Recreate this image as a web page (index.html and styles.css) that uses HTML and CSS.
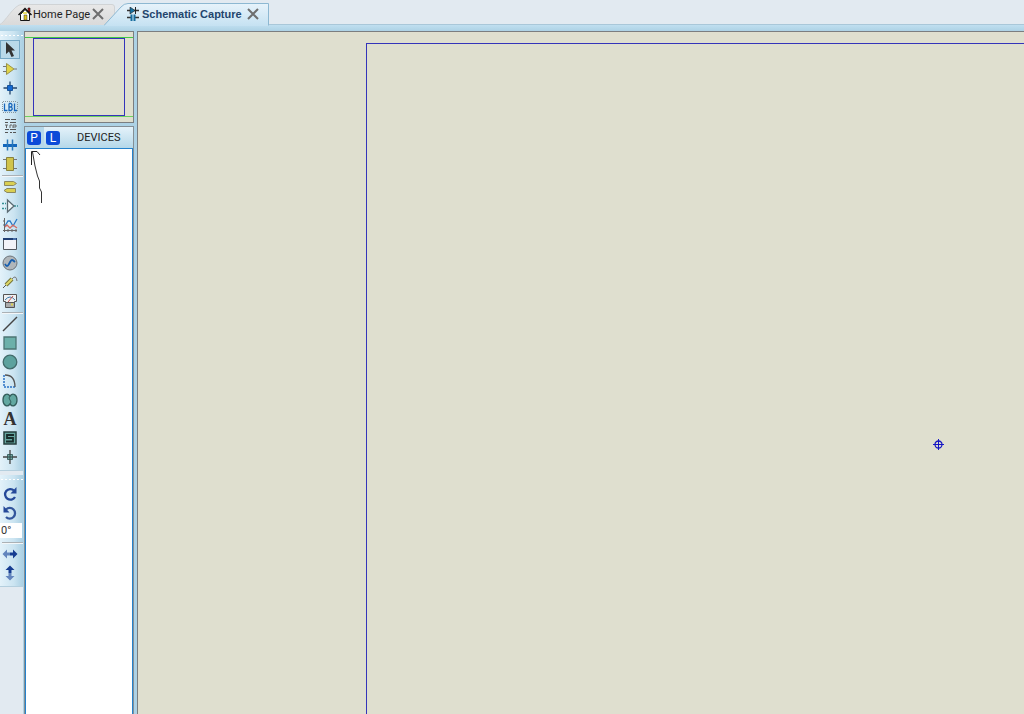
FILE: index.html
```html
<!DOCTYPE html>
<html lang="en">
<head>
    <meta charset="UTF-8">
    <meta name="viewport" content="width=device-width, initial-scale=1.0">
    <title>Schematic Capture</title>
    <link rel="stylesheet" href="styles.css">
</head>
<body>
    <header class="tabs">
        <div class="tab home">
            <svg class="tab-shape" width="116" height="22"><defs><linearGradient id="g1" x2="0" y2="1"><stop stop-color="#e8e8e8"/><stop offset="1" stop-color="#dadada"/></linearGradient></defs><path d="M-1 22C5 20 14 1 22 1.500H112Q114.500 1.500 114.500 4V22" fill="url(#g1)" stroke="#d0d3d5"/></svg>
            <svg class="tab-icon" width="14" height="14" viewBox="0 0 14 14"><path d="M2.500 7.500V13.500H11.500V7L7 2.500Z" fill="#fff" stroke="#111"/><path d="M10 1h2v4h-2z" fill="#b22" stroke="#111" stroke-width=".6"/><path d="M.5 8L7 1.500L13.500 8" fill="none" stroke="#111" stroke-width="1.500"/><path d="M6 8h3v5H6z" fill="#dfc520" stroke="#333" stroke-width=".5"/><path d="M5 5h4v2H5z" fill="#eee36a"/></svg>
            <button class="tab-name">Home Page</button>
            <button class="close" aria-label="Close Home Page"><svg width="12" height="12"><path d="M1 1L11 11M11 1L1 11" stroke="#6e6e6e" stroke-width="2"/></svg></button>
        </div>
        <div class="tab active">
            <svg class="tab-shape" width="166" height="23"><defs><linearGradient id="g2" x2="0" y2="1"><stop stop-color="#e7f3fb"/><stop offset="1" stop-color="#c6e2f2"/></linearGradient></defs><path d="M0 22.500L17 4Q20 .5 24 .5H164.500V22.500" fill="url(#g2)" stroke="#8db8d2"/><path d="M1 22.500H164" stroke="#c6e2f2"/></svg>
            <svg class="tab-icon" width="12" height="15" viewBox="0 0 12 15"><path d="M0 3.500H12M0 10.500H4M8 10.500H12" stroke="#333" stroke-width="1.300"/><path d="M3 0L8 3.500L3 7Z" fill="#1673a5" stroke="#222" stroke-width=".6"/><path d="M8.500 0V7" stroke="#222"/><path d="M4.500 7.500V14M7.500 7.500V14" stroke="#156c9e" stroke-width="2"/></svg>
            <button class="tab-name">Schematic Capture</button>
            <button class="close" aria-label="Close Schematic Capture"><svg width="12" height="12"><path d="M1 1L11 11M11 1L1 11" stroke="#6e6e6e" stroke-width="2"/></svg></button>
        </div>
    </header>

    <main class="workspace">
        <aside class="tools">
            <div class="toolbar">
                <div class="grip"></div>
                <button class="tool selected" aria-label="Selection"><svg viewBox="0 0 16 16"><path d="M4 0V12L7 9.500L9.500 15L12 14L9.500 8.500H13Z" fill="#333"/></svg></button>
                <button class="tool" aria-label="Component"><svg viewBox="0 0 16 16"><path d="M1 5.500H5M1 10.500H5M12 8H15" stroke="#777"/><path d="M4.500 2.500L12 8L4.500 13.500Z" fill="#e0d548" stroke="#9b954a"/></svg></button>
                <button class="tool" aria-label="Junction dot"><svg viewBox="0 0 16 16"><path d="M8 1.500V14.500M1.500 8H15" stroke="#24466c" stroke-width="1.300"/><path d="M5.500 5.500h5v5h-5z" fill="#146bd4" stroke="#16539c"/></svg></button>
                <button class="tool" aria-label="Wire label"><svg viewBox="0 0 16 16"><path d="M1 2.500H15M1 13.500H15M.5 3V13M15.500 3V13" stroke="#87979f" stroke-dasharray="1 1"/><path d="M2.500 4.500V11.500H5.500M7 4.500V11.500H9Q11.500 9.500 9 8H7H9Q11 6 9 4.500H7M12.500 4.500V11.500H15" fill="none" stroke="#1766ba" stroke-width="1.300"/></svg></button>
                <button class="tool" aria-label="Text script"><svg viewBox="0 0 16 16"><path d="M3 1.500H8M9 1.500H14M3 4.500H6M8 4.500H14M3 11.500H7M8 11.500H14M3 14.500H6M8 14.500H10M11 14.500H14" stroke="#555"/><path d="M3 7H6M4.500 7V10M8 10V7H10M11 10V7H14V9H11" fill="none" stroke="#666"/></svg></button>
                <button class="tool" aria-label="Buses"><svg viewBox="0 0 16 16"><path d="M1 8.500H15" stroke="#1266bd" stroke-width="3"/><path d="M5.500 2.500V13.500M10.500 2.500V13.500" stroke="#2976b8" stroke-width="1.500"/></svg></button>
                <button class="tool" aria-label="Subcircuit"><svg viewBox="0 0 16 16"><path d="M1 3.500H15M1 12.500H15" stroke="#777"/><path d="M4.500 1.500h7v13h-7z" fill="#d0c44b" stroke="#88823e"/></svg></button>
                <div class="rule"></div>
                <button class="tool" aria-label="Terminals"><svg viewBox="0 0 16 16"><path d="M2.500 2.500H11.500L14.500 4.500L11.500 6.500H2.500ZM13.500 9.500H5L2 11.500L5 13.500H13.500Z" fill="#d9cf52" stroke="#8b8960"/></svg></button>
                <button class="tool" aria-label="Device pins"><svg viewBox="0 0 16 16"><path d="M0 5.500H4M0 10.500H4M12 8H16" stroke="#368f94" stroke-width="1.300" stroke-dasharray="2 1"/><path d="M5.500 2V14L12 8Z" fill="#edf5f8" stroke="#5b6a72" stroke-width="1.300"/></svg></button>
                <button class="tool" aria-label="Graph"><svg viewBox="0 0 16 16"><path d="M2.500 1V15M1 13.500H15M1 4h2M1 8h2M6 12v3M10 12v3M14 12v3" stroke="#666"/><path d="M3 9L6 4L8 4L11 9L15 2" fill="none" stroke="#2b79c5" stroke-width="1.300"/><path d="M3 10L5 8L8 11L11 8L15 11" fill="none" stroke="#d66a60" stroke-width="1.300"/></svg></button>
                <button class="tool" aria-label="Active popup"><svg viewBox="0 0 16 16"><path d="M1.500 2.500h13v11h-13z" fill="#f2f3f8" stroke="#52575e"/><path d="M1 3h14" stroke="#203e73" stroke-width="2"/><path d="M11 3h3" stroke="#72a6e1"/></svg></button>
                <button class="tool" aria-label="Generator"><svg viewBox="0 0 16 16"><circle cx="8" cy="8" r="7" fill="#b0b6ba" stroke="#6c7379"/><path d="M3 9Q5 13 7 9T10 5T13 7" fill="none" stroke="#175fae" stroke-width="1.800"/></svg></button>
                <button class="tool" aria-label="Probe"><svg viewBox="0 0 16 16"><path d="M1 14L4 11" stroke="#555"/><path d="M4 11L10 5" stroke="#77763a" stroke-width="4"/><path d="M4 11L10 5" stroke="#dfd967" stroke-width="2"/><path d="M10 5Q14 0 15 7" fill="none" stroke="#777"/></svg></button>
                <button class="tool" aria-label="Instruments"><svg viewBox="0 0 16 16"><path d="M1.500 1.500h13v7h-2v2h-9v-2h-2z" fill="#eef0f1" stroke="#555"/><path d="M3 7Q8 1 13 7" fill="none" stroke="#3a79ab"/><path d="M6 9L11 3" stroke="#c65048"/><path d="M3.500 9.500h9v5h-9z" fill="#aaa" stroke="#555"/><path d="M9 11.500h2" stroke="#ddd451" stroke-width="2"/></svg></button>
                <div class="rule"></div>
                <button class="tool" aria-label="Line"><svg viewBox="0 0 16 16"><path d="M1 15L15 1" stroke="#444" stroke-width="1.500"/></svg></button>
                <button class="tool" aria-label="Box"><svg viewBox="0 0 16 16"><path d="M2 2h12v12H2z" fill="#6cb0aa" stroke="#4c7473" stroke-width="1.300"/></svg></button>
                <button class="tool" aria-label="Circle"><svg viewBox="0 0 16 16"><circle cx="8" cy="8" r="6.800" fill="#5da29e" stroke="#426b6b" stroke-width="1.300"/></svg></button>
                <button class="tool" aria-label="Arc"><svg viewBox="0 0 16 16"><path d="M2 2V14H14" fill="none" stroke="#2a72c5" stroke-width="1.500" stroke-dasharray="2 1"/><path d="M3 2Q13 2 13 14" fill="none" stroke="#555" stroke-width="1.300"/></svg></button>
                <button class="tool" aria-label="Path"><svg viewBox="0 0 16 16"><path d="M8 4C5 0 1 3 1 8S5 16 8 12C11 16 15 13 15 8S11 0 8 4Z" fill="#62a8a1" stroke="#345e5c" stroke-width="1.300"/><path d="M8 4Q6 6 8 8Q10 10 8 12" fill="none" stroke="#345e5c"/></svg></button>
                <button class="tool letter">A</button>
                <button class="tool" aria-label="Symbol"><svg viewBox="0 0 16 16"><path d="M2 2h12v12H2z" fill="#65a49e" stroke="#253e3e" stroke-width="1.500"/><path d="M12 5H5V8H11V11.500H4" fill="none" stroke="#172b2b" stroke-width="1.800"/></svg></button>
                <button class="tool" aria-label="Marker"><svg viewBox="0 0 16 16"><path d="M8 1V15M1 8H15" stroke="#444" stroke-width="1.300"/><path d="M5.500 5.500h5v5h-5z" fill="#70aaa5" stroke="#426767"/><path d="M8 5V11M5 8H11" stroke="#344"/></svg></button>
            </div>
            <div class="toolbar">
                <div class="grip"></div>
                <button class="tool" aria-label="Rotate clockwise"><svg viewBox="0 0 16 16"><path d="M12 4.500A5.300 5.300 0 1 0 13 11" fill="none" stroke="#254999" stroke-width="2.300"/><path d="M14.500 1V7.500H8.500Z" fill="#254999"/></svg></button>
                <button class="tool" aria-label="Rotate anticlockwise"><svg viewBox="0 0 16 16"><path d="M4 4.500A5.300 5.300 0 1 1 4 12" fill="none" stroke="#33569c" stroke-width="2.300"/><path d="M1.500 1V7.500H7.500Z" fill="#254999"/></svg></button>
                <input class="angle" type="text" value="0°" aria-label="Rotation angle">
                <div class="rule"></div>
                <button class="tool" aria-label="Mirror horizontally"><svg viewBox="0 0 16 16"><path d="M.5 8L5 3.500V6.500H8V9.500H5V12.500Z" fill="#6385bd"/><path d="M15.500 8L11 3.500V6.500H8V9.500H11V12.500Z" fill="#173d91"/></svg></button>
                <button class="tool" aria-label="Mirror vertically"><svg viewBox="0 0 16 16"><path d="M8 .5L12.500 5H9.500V8H6.500V5H3.500Z" fill="#173d91"/><path d="M8 15.500L3.500 11H6.500V8H9.500V11H12.500Z" fill="#6385bd"/></svg></button>
            </div>
        </aside>

        <section class="sidebar">
            <div class="preview"><div class="preview-sheet"></div></div>
            <div class="devices">
                <div class="devices-head">
                    <div class="pick"><button class="key">P</button></div>
                    <button class="key">L</button>
                    <h2 class="devices-title">DEVICES</h2>
                </div>
                <div class="device-list">
                    <svg class="arrow" width="14" height="54" viewBox="0 0 14 54"><path d="M2.500 15V1.500H8L11 5" fill="none" stroke="#222"/><path d="M3.500 2L6 16L8.500 26L10.500 31V38L12.500 42V53" fill="none" stroke="#333"/></svg>
                </div>
            </div>
        </section>

        <section class="canvas">
            <div class="sheet">
                <svg class="origin" width="13" height="13"><circle cx="6.500" cy="6.500" r="3.500" fill="none" stroke="#1616c4" stroke-width="1.300"/><path d="M6.500 1V12M1 6.500H12" stroke="#1616c4"/></svg>
            </div>
        </section>
    </main>
</body>
</html>
```
FILE: styles.css
```css
* {
    box-sizing: border-box;
}
body {
    margin: 0;
    height: 100vh;
    display: flex;
    flex-direction: column;
    overflow: hidden;
    font-family: Roboto, "Liberation Sans", Arial, sans-serif;
    font-size: 11px;
    color: #222;
    background-color: #e2eaf1;
}
button {
    font: inherit;
    color: inherit;
    background: none;
    border: none;
    padding: 0;
    margin: 0;
}
svg {
    display: block;
}
.tabs {
    display: flex;
    height: 25px;
    flex-shrink: 0;
    border-bottom: 1px solid #a9c7d9;
}
.tab {
    position: relative;
    display: flex;
    align-items: center;
    height: 22px;
    margin-top: 3px;
}
.tab-shape {
    position: absolute;
    left: 0;
    top: 0;
}
.tab-icon, .tab-name, .close {
    position: relative;
    flex-shrink: 0;
}
.tab-name {
    text-align: left;
    white-space: nowrap;
}
.home {
    width: 116px;
    padding-left: 18px;
}
.home .tab-name {
    width: 53px;
    margin-left: 1px;
}
.close {
    margin-left: 6px;
}
.active {
    width: 166px;
    margin-left: -12px;
    padding-left: 23px;
}
.active .tab-name {
    width: 99px;
    margin-left: 3px;
    color: #1f456d;
    font-family: "Liberation Sans", Arial, sans-serif;
    font-weight: bold;
}
.workspace {
    display: flex;
    flex: 1;
    min-height: 0;
    padding-top: 6px;
    background: linear-gradient(#c0dff0, #add2e5 6px, #add2e5);
}
.tools {
    width: 23px;
    flex-shrink: 0;
    background-color: #e2eaf1;
}
.toolbar {
    padding-bottom: 4px;
    margin-bottom: 4px;
    background: linear-gradient(to right, #e3f2fa, #cbe4f1 60%, #abd0e3);
    border-bottom: 1px solid #b4cfde;
}
.grip {
    height: 9px;
    border-top: 3px solid transparent;
    background: radial-gradient(circle, #fff 1px, transparent 1px) 0 0 / 4px 3px repeat-x;
}
.tool {
    display: flex;
    align-items: center;
    justify-content: center;
    width: 20px;
    height: 19px;
}
.tool svg {
    width: 16px;
    height: 16px;
    flex-shrink: 0;
}
.selected {
    background-color: #b9d9e9;
    border: 1px solid #76a8c5;
}
.letter {
    padding-top: 2px;
    font: bold 18px "Liberation Serif", "Times New Roman", serif;
    color: #333;
}
.rule {
    height: 4px;
    margin-left: 2px;
    border-bottom: 1px solid #f3f7f9;
    background: linear-gradient(#abb1b5, #abb1b5) 0 2px / 100% 1px no-repeat;
}
.angle {
    display: block;
    width: 22px;
    height: 15px;
    margin: 1px 0 2px;
    padding: 0 1px;
    border: none;
    font: inherit;
    color: #333;
    background-color: #fff;
}
.sidebar {
    display: flex;
    flex-direction: column;
    width: 110px;
    margin-left: 1px;
    flex-shrink: 0;
}
.preview {
    height: 92px;
    padding: 6px 8px;
    border: 1px solid #7b7e80;
    background: linear-gradient(#43c846, #43c846) 0 5px / 100% 1px no-repeat,
        linear-gradient(#6cd160, #6cd160) 0 84px / 100% 1px no-repeat, #dfdfcf;
}
.preview-sheet {
    height: 78px;
    border: 1px solid #3434ba;
}
.devices {
    display: flex;
    flex: 1;
    flex-direction: column;
    margin-top: 3px;
    border: 1px solid #858f95;
    border-bottom: none;
}
.devices-head {
    display: flex;
    align-items: center;
    height: 21px;
    background: linear-gradient(#e4f2fa, #b5d8e9);
}
.pick {
    display: flex;
    align-items: center;
    width: 19px;
    height: 100%;
    padding-left: 2px;
    margin-right: 2px;
    background-color: #b6d8ea;
}
.key {
    width: 14px;
    height: 14px;
    border-radius: 3px;
    background-color: #0b4ad8;
    color: #fff;
    font-size: 12px;
    line-height: 14px;
}
.devices-title {
    margin: 0 0 0 17px;
    font-size: 11px;
    font-weight: normal;
}
.device-list {
    position: relative;
    flex: 1;
    border: 1px solid #2582cc;
    border-bottom: none;
    background-color: #fff;
}
.arrow {
    position: absolute;
    left: 3px;
    top: 1px;
}
.canvas {
    display: flex;
    flex: 1;
    margin-left: 3px;
    padding: 11px 0 0 228px;
    border: 1px solid #7b7e80;
    border-width: 1px 0 0 1px;
    background-color: #dfdfcf;
}
.sheet {
    position: relative;
    flex: 1;
    border: 1px solid #3434ba;
    border-width: 1px 0 0 1px;
}
.origin {
    position: absolute;
    left: 565px;
    top: 394px;
}
```
